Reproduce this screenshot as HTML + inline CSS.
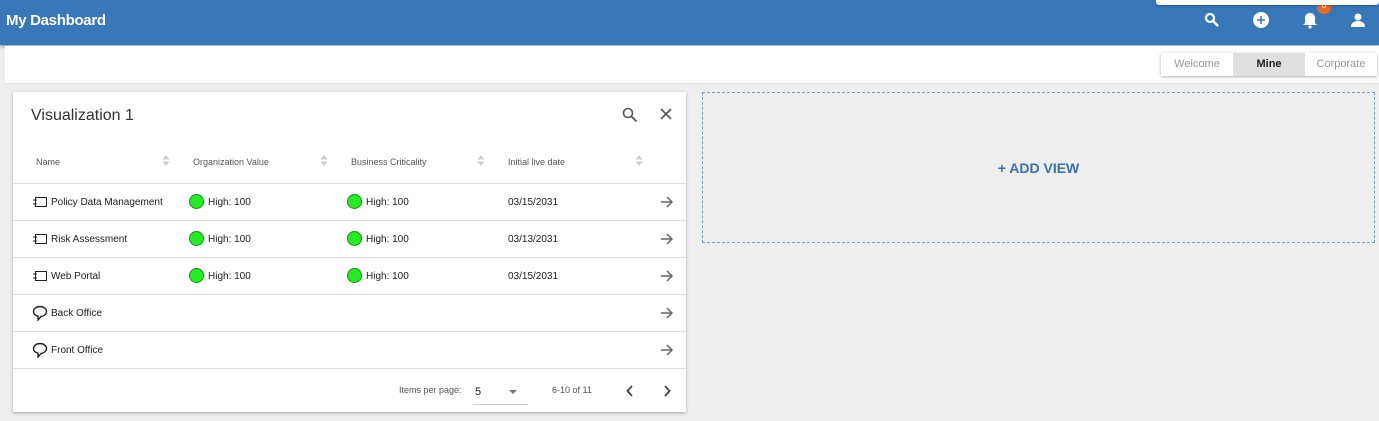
<!DOCTYPE html>
<html><head><style>
*{box-sizing:border-box;margin:0;padding:0}
body{width:1379px;height:421px;background:#eeeeee;font-family:"Liberation Sans",sans-serif;position:relative;overflow:hidden}
.hdr{position:absolute;left:0;top:0;width:1379px;height:45px;background:#3877b8;box-shadow:0 2px 3px rgba(0,0,0,.3)}
.hdr h1{position:absolute;left:6px;top:12px;color:#fff;font-size:15px;font-weight:bold;letter-spacing:-0.3px}
.pop{position:absolute;left:1156px;top:0;width:223px;height:5px;background:#fff;border-radius:0 0 3px 3px;box-shadow:0 1px 2px rgba(0,0,0,.3)}
.sub{position:absolute;left:5px;top:46px;width:1374px;height:38px;background:#fff;border-bottom:1px solid #ddd}
.tabs{position:absolute;left:1161px;top:53px;height:23px;display:flex;box-shadow:0 1px 3px rgba(0,0,0,.3);font-size:11px}
.tabs div{width:72px;text-align:center;line-height:23px;color:#999;background:#fff}
.tabs .on{background:#e0e0e0;color:#222;font-weight:bold}
.card{position:absolute;left:13px;top:92px;width:673px;height:320px;background:#fff;box-shadow:0 1px 3px rgba(0,0,0,.3)}
.title{position:absolute;left:18px;top:15px;font-size:16px;color:#333}
.th{position:absolute;top:65px;font-size:9px;color:#555}
.row{position:absolute;left:0;width:673px;height:37px;border-top:1px solid #e0e0e0;font-size:10px;color:#222}
.row span{position:absolute;top:13px}
.dot{position:absolute;top:10px;width:15px;height:15px;border-radius:50%;background:#22ee22;border:1px solid #1a8a1a}
.arr{position:absolute;left:647px;top:12px}
.add{position:absolute;left:702px;top:92px;width:673px;height:151px;border:1px dashed #7a9cc6}
.add div{position:absolute;left:0;right:0;top:67px;text-align:center;color:#3c6fb0;font-weight:bold;font-size:14px}
.srt{position:absolute;top:62px}
</style></head><body>
<div class="hdr"><h1>My Dashboard</h1>
<svg style="position:absolute;left:1204px;top:12px" width="16" height="16"><circle cx="6" cy="6" r="4" stroke="#fff" stroke-width="2.2" fill="none"/><path d="M9 9l5 5" stroke="#fff" stroke-width="2.5"/></svg>
<svg style="position:absolute;left:1252px;top:11px" width="18" height="18"><circle cx="9" cy="9" r="8" fill="#fff"/><path d="M9 5v8M5 9h8" stroke="#3877b8" stroke-width="1.6"/></svg>
<svg style="position:absolute;left:1301px;top:11px" width="18" height="18"><path d="M9 2c-3 0-5 2-5 5v5l-2 2h14l-2-2V7c0-3-2-5-5-5z" fill="#fff"/><circle cx="9" cy="16" r="1.6" fill="#fff"/></svg>
<div style="position:absolute;left:1317px;top:0;width:14px;height:14px;border-radius:50%;background:#ee6a22;color:#fff;font-size:8px;text-align:center;line-height:11px">0</div>
<svg style="position:absolute;left:1350px;top:12px" width="16" height="16"><circle cx="8" cy="5" r="3.5" fill="#fff"/><path d="M1 15c0-4 3-6 7-6s7 2 7 6z" fill="#fff"/></svg>
</div>
<div class="pop"></div>
<div class="sub"></div>
<div class="tabs"><div>Welcome</div><div class="on">Mine</div><div>Corporate</div></div>
<div class="card">
<div class="title">Visualization 1</div>
<svg style="position:absolute;left:609px;top:15px" width="16" height="16"><circle cx="6" cy="6" r="4.5" stroke="#555" stroke-width="1.6" fill="none"/><path d="M9.5 9.5l5 5" stroke="#555" stroke-width="1.8"/></svg>
<svg style="position:absolute;left:647px;top:16px" width="12" height="12"><path d="M1 1l10 10M11 1L1 11" stroke="#555" stroke-width="1.6"/></svg>
<div class="th" style="left:23px">Name</div><div class="th" style="left:180px">Organization Value</div><div class="th" style="left:338px">Business Criticality</div><div class="th" style="left:495px">Initial live date</div>
<svg class="srt" style="left:149px" width="8" height="13"><path d="M4 1l3.5 4.5h-7zM4 12L.5 7.5h7z" fill="#ccc"/></svg>
<svg class="srt" style="left:307px" width="8" height="13"><path d="M4 1l3.5 4.5h-7zM4 12L.5 7.5h7z" fill="#ccc"/></svg>
<svg class="srt" style="left:464px" width="8" height="13"><path d="M4 1l3.5 4.5h-7zM4 12L.5 7.5h7z" fill="#ccc"/></svg>
<svg class="srt" style="left:622px" width="8" height="13"><path d="M4 1l3.5 4.5h-7zM4 12L.5 7.5h7z" fill="#ccc"/></svg>
<div class="row" style="top:91px"><svg style="position:absolute;left:19px;top:12px" width="16" height="12"><rect x="3.5" y="1.5" width="11" height="9" fill="none" stroke="#222"/><path d="M1 4h4M1 8h4" stroke="#222"/></svg><span style="left:38px">Policy Data Management</span><i class="dot" style="left:176px"></i><span style="left:195px">High: 100</span><i class="dot" style="left:334px"></i><span style="left:353px">High: 100</span><span style="left:495px">03/15/2031</span><svg class="arr" width="14" height="12"><path d="M1 6h11M7 1l5 5-5 5" fill="none" stroke="#666" stroke-width="1.5"/></svg></div>
<div class="row" style="top:128px"><svg style="position:absolute;left:19px;top:12px" width="16" height="12"><rect x="3.5" y="1.5" width="11" height="9" fill="none" stroke="#222"/><path d="M1 4h4M1 8h4" stroke="#222"/></svg><span style="left:38px">Risk Assessment</span><i class="dot" style="left:176px"></i><span style="left:195px">High: 100</span><i class="dot" style="left:334px"></i><span style="left:353px">High: 100</span><span style="left:495px">03/13/2031</span><svg class="arr" width="14" height="12"><path d="M1 6h11M7 1l5 5-5 5" fill="none" stroke="#666" stroke-width="1.5"/></svg></div>
<div class="row" style="top:165px"><svg style="position:absolute;left:19px;top:12px" width="16" height="12"><rect x="3.5" y="1.5" width="11" height="9" fill="none" stroke="#222"/><path d="M1 4h4M1 8h4" stroke="#222"/></svg><span style="left:38px">Web Portal</span><i class="dot" style="left:176px"></i><span style="left:195px">High: 100</span><i class="dot" style="left:334px"></i><span style="left:353px">High: 100</span><span style="left:495px">03/15/2031</span><svg class="arr" width="14" height="12"><path d="M1 6h11M7 1l5 5-5 5" fill="none" stroke="#666" stroke-width="1.5"/></svg></div>
<div class="row" style="top:202px"><svg style="position:absolute;left:19px;top:10px" width="16" height="16"><path d="M8 1.5c3.6 0 6.5 2.3 6.5 5s-3 5-5.5 5L6 15V11.2C3.3 10.5 1.5 8.7 1.5 6.5 1.5 3.8 4.4 1.5 8 1.5z" fill="none" stroke="#222" stroke-width="1.4"/></svg><span style="left:38px">Back Office</span><svg class="arr" width="14" height="12"><path d="M1 6h11M7 1l5 5-5 5" fill="none" stroke="#666" stroke-width="1.5"/></svg></div>
<div class="row" style="top:239px"><svg style="position:absolute;left:19px;top:10px" width="16" height="16"><path d="M8 1.5c3.6 0 6.5 2.3 6.5 5s-3 5-5.5 5L6 15V11.2C3.3 10.5 1.5 8.7 1.5 6.5 1.5 3.8 4.4 1.5 8 1.5z" fill="none" stroke="#222" stroke-width="1.4"/></svg><span style="left:38px">Front Office</span><svg class="arr" width="14" height="12"><path d="M1 6h11M7 1l5 5-5 5" fill="none" stroke="#666" stroke-width="1.5"/></svg></div>
<div class="row" style="top:276px;height:44px"><span style="left:386px;top:16px;font-size:9px;color:#555">Items per page:</span><span style="left:462px;top:17px;font-size:11px">5</span><svg style="position:absolute;left:496px;top:21px" width="8" height="5"><path d="M0 0h8L4 4z" fill="#777"/></svg><div style="position:absolute;left:460px;top:35px;width:55px;border-top:1px solid #ccc"></div><span style="left:539px;top:16px;font-size:9px;color:#555">6-10 of 11</span><svg style="position:absolute;left:613px;top:16px" width="8" height="12"><path d="M6 1L1.5 6 6 11" fill="none" stroke="#444" stroke-width="1.8"/></svg><svg style="position:absolute;left:650px;top:16px" width="8" height="12"><path d="M2 1l4.5 5L2 11" fill="none" stroke="#444" stroke-width="1.8"/></svg></div>
</div>
<div class="add"><div>+ ADD VIEW</div></div>
</body></html>
